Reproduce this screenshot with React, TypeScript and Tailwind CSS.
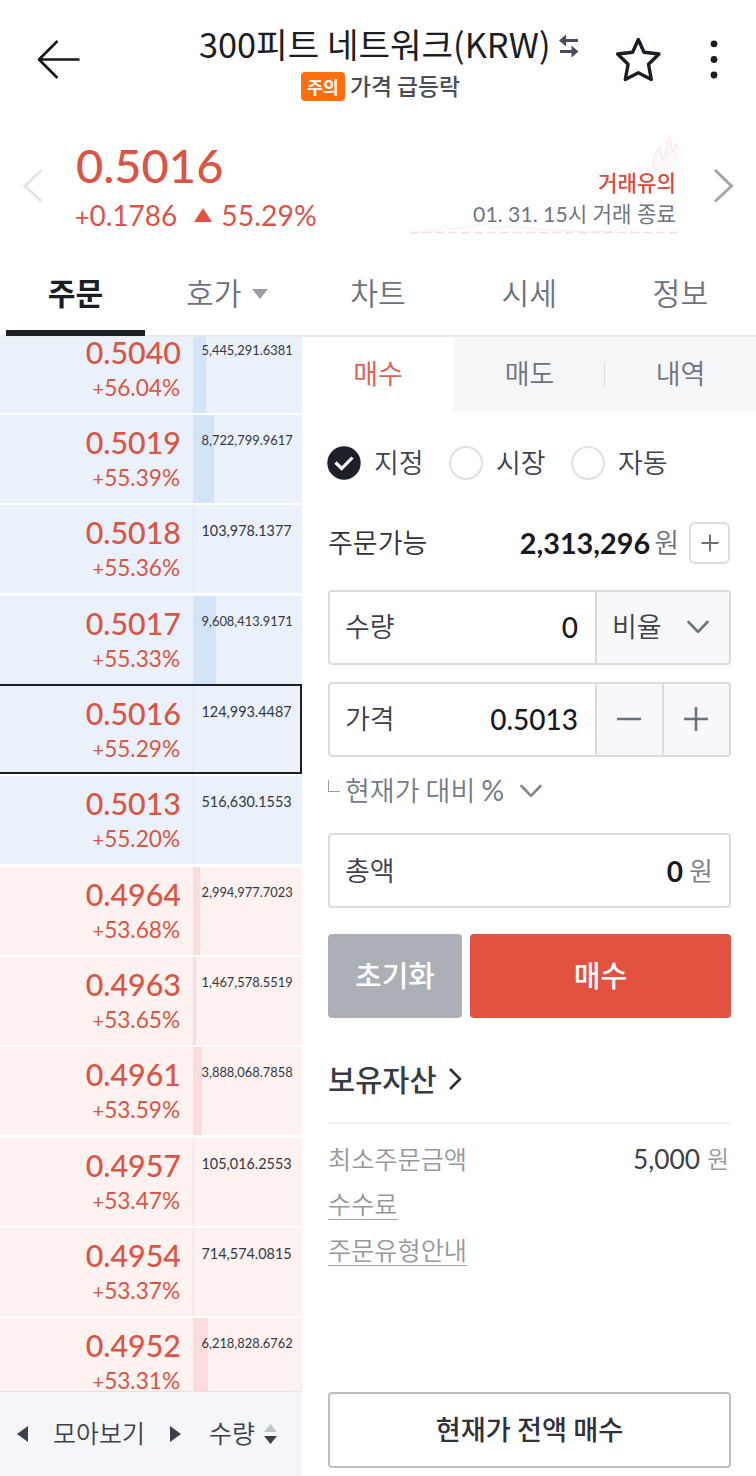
import React from "react";

type Order = { price: string; rate: string; qty: string; side: "ask" | "bid"; bar: number; current?: boolean };

const orders: Order[] = [
  { price: "0.5040", rate: "56.04%", qty: "5,445,291.6381", side: "ask", bar: 13 },
  { price: "0.5019", rate: "55.39%", qty: "8,722,799.9617", side: "ask", bar: 21 },
  { price: "0.5018", rate: "55.36%", qty: "103,978.1377", side: "ask", bar: 1 },
  { price: "0.5017", rate: "55.33%", qty: "9,608,413.9171", side: "ask", bar: 23 },
  { price: "0.5016", rate: "55.29%", qty: "124,993.4487", side: "ask", bar: 1, current: true },
  { price: "0.5013", rate: "55.20%", qty: "516,630.1553", side: "ask", bar: 1 },
  { price: "0.4964", rate: "53.68%", qty: "2,994,977.7023", side: "bid", bar: 7 },
  { price: "0.4963", rate: "53.65%", qty: "1,467,578.5519", side: "bid", bar: 3 },
  { price: "0.4961", rate: "53.59%", qty: "3,888,068.7858", side: "bid", bar: 9 },
  { price: "0.4957", rate: "53.47%", qty: "105,016.2553", side: "bid", bar: 1 },
  { price: "0.4954", rate: "53.37%", qty: "714,574.0815", side: "bid", bar: 1 },
  { price: "0.4952", rate: "53.31%", qty: "6,218,828.6762", side: "bid", bar: 15 },
];

const lato = "font-['Lato','Noto_Sans_CJK_KR',sans-serif]";

function Header() {
  return (
    <header className="flex h-[125px] items-start">
      <svg className="mt-[36px] ml-[34px] h-[48px] w-[48px] shrink-0" viewBox="0 0 48 48" fill="none" stroke="#17191f" strokeWidth="2.6">
        <path d="M45.500 23.500H5M23.500 5L5 23.500L23.500 42" strokeLinejoin="round" />
      </svg>
      <div className="ml-[117px] w-[383px] shrink-0 pt-[23px]">
        <div className="flex h-[41px] items-start">
          <h1 className="text-[34.300px] leading-[40px] font-normal whitespace-nowrap text-[#1b1d24]">300피트 네트워크(KRW)</h1>
          <svg className="mt-[11px] ml-[8px] h-[24px] w-[20px] shrink-0" viewBox="0 0 20 24" fill="#4b4b57">
            <path d="M0 6.500L7 0.500V5H19V8H7V12.500Z" />
            <path d="M19.500 17.500L12.500 11.500V16H1V19H12.500V23.500Z" />
          </svg>
        </div>
        <div className="ml-[102px] flex h-[44px] items-center">
          <span className="flex h-[29px] w-[44px] items-center justify-center rounded-[4px] bg-[#ff6f10] text-[17px] leading-[29px] font-bold text-white">주의</span>
          <span className="ml-[5px] text-[22.800px] leading-[30px] font-medium whitespace-nowrap text-[#4a4d55]">가격 급등락</span>
        </div>
      </div>
      <svg className="mt-[34px] ml-[32px] h-[50px] w-[48px] shrink-0" viewBox="0 0 48 50" fill="none" stroke="#1b1d24" strokeWidth="3.400" strokeLinejoin="round">
        <path d="M24.300 5.500L30 18.200L45 20L34.500 30.200L37.300 45.500L24.300 38.700L11.300 45.500L14.100 30.200L3.600 20L18.600 18.200Z" />
      </svg>
      <svg className="mt-[36px] ml-[46px] h-[48px] w-[12px] shrink-0" viewBox="0 0 12 48" fill="#1b1d24">
        <circle cx="6" cy="7.800" r="3.400" />
        <circle cx="6" cy="23.500" r="3.400" />
        <circle cx="6" cy="39" r="3.400" />
      </svg>
    </header>
  );
}

function Quote() {
  return (
    <section className="relative flex h-[130px]">
      <svg className="absolute top-[8px] left-[408px] h-[104px] w-[272px]" viewBox="0 0 272 104" fill="none">
        <defs>
          <linearGradient id="flame" x1="0" y1="0" x2="0" y2="1">
            <stop offset="0" stopColor="#fdf5f5" />
            <stop offset="0.3" stopColor="#fef8f8" />
            <stop offset="0.420" stopColor="#ffffff" />
          </linearGradient>
        </defs>
        <path d="M244 35L246 24L249 17L252 13L254 27L257 21L259 10L262 4L264 15L265 19L268 10L271 16V101H244Z" fill="url(#flame)" />
        <path d="M2 101L12 99L20 97L30 98L36 92L42 96L60 94L76 91L82 95L100 93L130 96L180 99L206 98L216 93L224 98" stroke="#fbebeb" strokeWidth="1" />
        <path d="M244 35L246 24L249 17L252 13L254 27L257 21L259 10L262 4L264 15L265 19L268 10L271 16" stroke="#fae3e2" strokeWidth="1" />
        <path d="M1 99.500H271" stroke="#f9dcde" strokeWidth="1.600" strokeDasharray="9 4" />
      </svg>
      <svg className="mt-[43px] ml-[22px] h-[36px] w-[22px] shrink-0" viewBox="0 0 22 36" fill="none" stroke="#e3e4e6" strokeWidth="3">
        <path d="M19.500 2L3 18L19.500 33.500" />
      </svg>
      <div className={`relative ml-[32px] w-[260px] shrink-0 ${lato} text-[#d95545]`}>
        <div className="mt-[10px] text-[47px] leading-[60px] font-medium">0.5016</div>
        <div className="-ml-px mt-[3px] flex h-[34px] items-center text-[28px] leading-[34px]">
          <span><span className="text-[25px]">+</span>0.1786</span>
          <svg className="mr-[9px] ml-[17px] h-[14px] w-[18px] shrink-0" viewBox="0 0 18 14" fill="#e15241">
            <path d="M9 0L18 14H0Z" />
          </svg>
          <span className="text-[28.400px]">55.29%</span>
        </div>
      </div>
      <div className="relative ml-auto pt-[42px] pr-[37px] text-right">
        <div className="text-[21.200px] leading-[30px] font-medium text-[#d94a41]">거래유의</div>
        <div className={`mt-[2px] text-[21.200px] leading-[31px] ${lato} text-[#6f757f]`}>01. 31. 15시 거래 종료</div>
      </div>
      <svg className="mt-[43px] mr-[21px] h-[36px] w-[22px] shrink-0" viewBox="0 0 22 36" fill="none" stroke="#a4a6aa" strokeWidth="3">
        <path d="M2 2L18.500 18L2 33.500" />
      </svg>
    </section>
  );
}

function MainTabs() {
  return (
    <nav className="grid h-[82px] grid-cols-5 border-b-2 border-[#e9eaec] text-center text-[30.200px] leading-[74px] font-[350] text-[#6b727d]">
      <div className="relative font-bold text-[#1b1d24]">
        주문
        <span className="absolute bottom-[-1px] left-[6px] h-[6px] w-[139px] bg-[#1c2027]" />
      </div>
      <div className="flex justify-center">
        호가
        <svg className="mt-[34px] ml-[10px] h-[10px] w-[16px]" viewBox="0 0 16 10" fill="#9a9da5">
          <path d="M0 0H16L8 10Z" />
        </svg>
      </div>
      <div>차트</div>
      <div>시세</div>
      <div>정보</div>
    </nav>
  );
}

function OrderRow({ order }: { order: Order }) {
  const ask = order.side === "ask";
  return (
    <div className="relative h-[90.33px] shrink-0 pb-[2.33px]">
      <div className={`flex h-full ${ask ? "bg-[#eaf1fb]" : "bg-[#fdf2f0]"}`}>
        <div className="w-[181px] shrink-0 pt-[8px] text-right text-[#d95545]">
          <div className="text-[30.400px] leading-[38px] font-medium">{order.price}</div>
          <div className="mt-[2px] pr-[1px] text-[22.600px] leading-[30px]"><span className="text-[20px]">+</span>{order.rate}</div>
        </div>
        <div className="ml-[12px] flex w-[109px]">
          <div className="h-full shrink-0" style={{ width: order.bar, backgroundColor: ask ? (order.bar > 1 ? "#d3e3f8" : "#dbe5f1") : order.bar > 1 ? "#fadcdd" : "#f6e0df" }} />
          <div className="w-0">
            <div className={`leading-[20px] whitespace-nowrap text-[#33373f] ${order.qty.length > 12 ? "pt-[15px] text-[12.900px]" : "pt-[16px] text-[14.400px]"}`} style={{ marginLeft: 8.5 - order.bar }}>
              {order.qty}
            </div>
          </div>
        </div>
      </div>
      {order.current && <div className="absolute top-[-2px] bottom-[2px] left-[-2px] w-[304px] border-2 border-[#1c1e26]" />}
    </div>
  );
}

function OrderBook() {
  return (
    <div className="flex w-[302px] shrink-0 flex-col">
      <div className="h-[1054px] overflow-hidden">
        <div className={`mt-[-12.300px] flex flex-col ${lato}`}>
          {orders.map((order) => (
            <OrderRow key={order.price} order={order} />
          ))}
        </div>
      </div>
      <div className="flex h-[85px] items-center border-t border-[#eadfe0] bg-[#f4f6f9] text-[25px] leading-[36px] font-[350] text-[#3d404b]">
        <svg className="ml-[17px] h-[16px] w-[11px]" viewBox="0 0 11 16" fill="#3d404b">
          <path d="M0 8L11 0V16Z" />
        </svg>
        <span className="mb-[4px] ml-[25px]">모아보기</span>
        <svg className="ml-[25px] h-[16px] w-[11px]" viewBox="0 0 11 16" fill="#3d404b">
          <path d="M11 8L0 0V16Z" />
        </svg>
        <span className="mb-[4px] ml-[28px]">수량</span>
        <svg className="ml-[9px] h-[20px] w-[13px]" viewBox="0 0 13 20">
          <path d="M6.500 0L13 8H0Z" fill="#c3c4c8" />
          <path d="M6.500 20L13 12H0Z" fill="#3d404b" />
        </svg>
      </div>
    </div>
  );
}

function Chevron({ className }: { className: string }) {
  return (
    <svg className={className} viewBox="0 0 22 14" fill="none" strokeWidth="2.600" strokeLinecap="round" strokeLinejoin="round">
      <path d="M1.500 2L11 11.800L20.500 2" />
    </svg>
  );
}

function Radio({ label, checked }: { label: string; checked?: boolean }) {
  return (
    <label className="flex w-[122px] items-center">
      {checked ? (
        <svg className="h-[34px] w-[34px] shrink-0" viewBox="0 0 34 34" fill="none">
          <circle cx="17" cy="17" r="16.700" fill="#1d2029" />
          <path d="M8.500 16.500L14.700 22.500L25.500 11.500" stroke="white" strokeWidth="3.200" />
        </svg>
      ) : (
        <span className="h-[34px] w-[34px] shrink-0 rounded-full border-2 border-[#dfe0e1]" />
      )}
      <span className="mb-[2px] ml-[13px] text-[27px] leading-[40px] text-[#3f434b]">{label}</span>
    </label>
  );
}

function OrderForm() {
  return (
    <div className="flex flex-1 flex-col font-[350]">
      <div className="flex h-[74px] text-center text-[27px] leading-[72px] text-[#6b727d]">
        <div className="w-[152px] font-normal text-[#dd6253]">매수</div>
        <div className="relative flex-1 bg-[#f4f6f8]">
          매도
          <span className="absolute top-[25px] right-0 h-[25px] w-[1px] bg-[#dddfe2]" />
        </div>
        <div className="flex-1 bg-[#f4f6f8]">내역</div>
      </div>
      <div className="flex flex-col pr-[25px] pl-[26px]">
        <div className="mt-[32px] -ml-px flex h-[40px] items-center">
          <Radio label="지정" checked />
          <Radio label="시장" />
          <Radio label="자동" />
        </div>
        <div className="mt-[39px] flex h-[42px] items-center">
          <span className="mb-[2px] text-[27px] leading-[42px] text-[#2f323a]">주문가능</span>
          <span className={`ml-auto ${lato} text-[28.800px] leading-[42px] font-bold text-[#17191e]`}>2,313,296</span>
          <span className="mb-[2px] ml-[4px] text-[27px] leading-[42px] text-[#6b727d]">원</span>
          <span className="mr-px ml-[10px] flex h-[42px] w-[41px] items-center justify-center rounded-[6px] border-2 border-[#dcddde]">
            <svg className="h-[18px] w-[18px]" viewBox="0 0 18 18" stroke="#6f7178" strokeWidth="2">
              <path d="M9 0.500V17.500M0.500 9H17.500" />
            </svg>
          </span>
        </div>

        <div className="mt-[25.500px] flex h-[75px] overflow-hidden rounded-[4px] border-2 border-[#dadbdc]">
          <div className="flex w-[265px] items-center pr-[17px] pl-[15px]">
            <span className="mb-[2px] text-[27px] leading-[40px] text-[#3d4048]">수량</span>
            <span className={`ml-auto ${lato} text-[28px] font-medium text-[#17191e]`}>0</span>
          </div>
          <div className="flex flex-1 items-center border-l-2 border-[#dadbdc] bg-[#f6f8fb] pl-[15px]">
            <span className="mb-[2px] text-[27px] leading-[40px] text-[#3d4048]">비율</span>
            <Chevron className="ml-[25px] h-[14px] w-[22px] stroke-[#6d717c]" />
          </div>
        </div>

        <div className="mt-[17px] flex h-[75px] overflow-hidden rounded-[4px] border-2 border-[#dadbdc]">
          <div className="flex w-[265px] items-center pr-[17px] pl-[15px]">
            <span className="mb-[2px] text-[27px] leading-[40px] text-[#3d4048]">가격</span>
            <span className={`ml-auto ${lato} text-[28px] font-medium text-[#17191e]`}>0.5013</span>
          </div>
          <div className="flex w-[67px] items-center justify-center border-l-2 border-[#dadbdc] bg-[#f6f8fb] pr-px">
            <svg className="h-[24px] w-[24px]" viewBox="0 0 24 24" stroke="#6d7080" strokeWidth="2.600">
              <path d="M0 12H24" />
            </svg>
          </div>
          <div className="flex flex-1 items-center justify-center border-l-2 border-[#dadbdc] bg-[#f6f8fb] pr-[2px]">
            <svg className="h-[24px] w-[24px]" viewBox="0 0 24 24" stroke="#6d7080" strokeWidth="2.600">
              <path d="M0 12H24M12 0V24" />
            </svg>
          </div>
        </div>

        <div className="mt-[13.500px] flex h-[40px] items-center text-[27px] leading-[40px] text-[#767b85]">
          <span className="mb-[8px] h-[12px] w-[12px] shrink-0 border-b border-l border-[#9a9da3]" />
          <span className="ml-[5px] whitespace-nowrap">현재가 대비</span>
          <span className={`ml-[6px] ${lato} text-[28.500px] font-normal`}>%</span>
          <Chevron className="mt-[1px] ml-[16px] h-[14px] w-[22px] stroke-[#858789]" />
        </div>

        <div className="mt-[23px] flex h-[75px] items-center rounded-[4px] border-2 border-[#dadbdc] px-[15px]">
          <span className="mb-[2px] text-[27px] leading-[40px] text-[#3d4048]">총액</span>
          <span className={`ml-auto ${lato} text-[28px] font-bold text-[#17191e]`}>0</span>
          <span className="mr-px mb-[2px] ml-[6px] text-[26px] leading-[40px] text-[#767b85]">원</span>
        </div>

        <div className="mt-[26px] flex h-[84px] gap-[8px] text-center leading-[80px] font-medium text-white">
          <button className="block w-[134px] rounded-[4px] bg-[#abafb6] pb-[4px] text-[29px] font-medium">초기화</button>
          <button className="block flex-1 rounded-[4px] bg-[#e15241] pb-[4px] text-[29px] font-medium">매수</button>
        </div>

        <div className="mt-[36px] flex h-[48px] items-center">
          <span className="text-[29.500px] leading-[48px] font-medium text-[#383b44]">보유자산</span>
          <svg className="mt-[2px] ml-[12px] h-[22px] w-[13px]" viewBox="0 0 13 22" fill="none" stroke="#2e3037" strokeWidth="2.600">
            <path d="M1 1L11 11L1 21" />
          </svg>
        </div>

        <div className="mt-[20px] border-t-2 border-[#f1f2f3] pt-[14px] text-[25.200px] leading-[40px] text-[#96989b]">
          <div className="flex h-[40px] items-center">
            <span>최소주문금액</span>
            <span className={`mt-[2px] ml-auto ${lato} text-[26.300px] font-normal text-[#3d4048]`}>5,000</span>
            <span className="mr-[2px] ml-[7px] text-[24px]">원</span>
          </div>
          <div className="mt-[9px] flex"><span className="border-b-[1.500px] border-[#a3a5a8] leading-[32px]">수수료</span></div>
          <div className="mt-[13px] flex"><span className="border-b-[1.500px] border-[#a3a5a8] leading-[32px]">주문유형안내</span></div>
        </div>
      </div>
      <button className="mt-auto mr-[25px] mb-[8px] ml-[26px] h-[76px] rounded-[4px] border-2 border-[#bdbec0] pb-[4px] text-[27.200px] leading-[67px] font-medium text-[#2f323a]">현재가 전액 매수</button>
    </div>
  );
}

export default function App() {
  return (
    <div className="flex h-[1476px] w-[756px] flex-col overflow-hidden bg-white font-['Noto_Sans_CJK_KR',sans-serif]">
      <Header />
      <Quote />
      <MainTabs />
      <main className="flex flex-1">
        <OrderBook />
        <OrderForm />
      </main>
    </div>
  );
}
